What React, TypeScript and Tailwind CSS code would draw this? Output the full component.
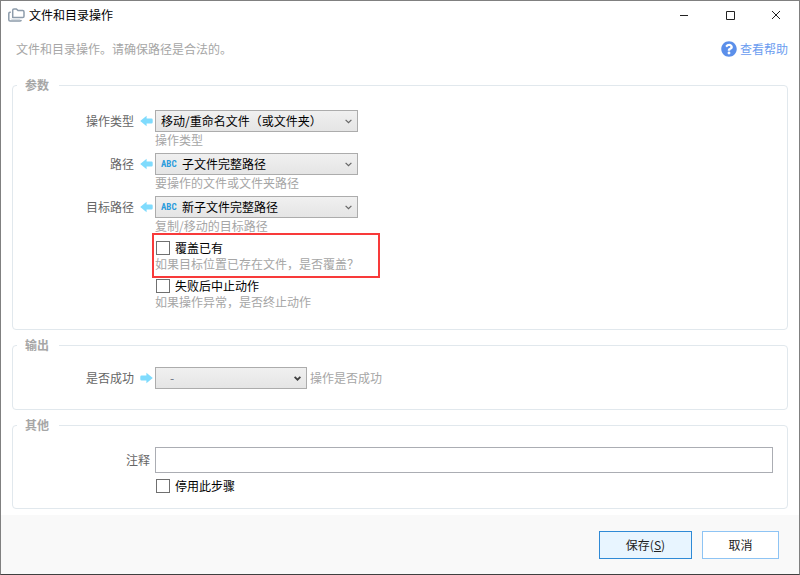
import React, { useState } from 'react';
import { FaQuestionCircle } from 'react-icons/fa';

const FolderIcon = () => (
  <svg width="17" height="14" viewBox="0 0 17 14" fill="none" stroke="#8d9cab" strokeWidth="1.5" strokeLinejoin="round" aria-hidden="true">
    <path d="M4.7 9.6V2.2q0-1.3 1.3-1.3h2.4l1.6 1.7h4.7q1.3 0 1.3 1.3v4.4q0 1.3-1.3 1.3z" />
    <path d="M2.8 4.3H2q-1.2 0-1.2 1.2v6.3q0 1.3 1.3 1.3h9.6q1.3 0 1.5-1.3" />
    <path d="M3 10.5q0 1 1 1h8" stroke="#d3dbe2" strokeWidth="1" />
  </svg>
);

const Arrow = ({ out }: { out?: boolean }) => (
  <svg width="13" height="12" viewBox="0 0 13 12" fill="#7fdbfd" className={out ? 'shrink-0 rotate-180' : 'shrink-0'} aria-hidden="true">
    <path d="M0.2 6L6.6 0.8v2.7h4.9q1.2 0 1.2 1.2v2.6q0 1.2-1.2 1.2H6.6v2.7z" />
  </svg>
);

interface DropDownProps {
  id: string;
  value: string;
  abc?: boolean;
  empty?: boolean;
}

const DropDown: React.FC<DropDownProps> = ({ id, value, abc, empty }) => {
  let pad = 'pl-[5px] text-black';
  if (abc) pad = 'pl-[26px] text-black';
  if (empty) pad = 'pl-3.5 text-gray-500';
  return (
    <div className={empty ? 'relative w-[152px]' : 'relative w-[203px]'}>
      <select
        id={id}
        className={`block h-[22px] w-full appearance-none border border-[#acacac] bg-linear-to-b from-[#f0f0f0] to-[#e5e5e5] pr-5 text-xs ${pad}`}
      >
        <option>{value}</option>
      </select>
      {abc && (
        <span className="pointer-events-none absolute inset-y-0 left-1.5 flex items-center font-['Roboto_Condensed','Roboto',sans-serif] text-[9px] font-bold text-[#2a9bdc]">
          ABC
        </span>
      )}
      <svg
        className="pointer-events-none absolute inset-y-0 right-1.5 my-auto"
        width="7"
        height="5"
        viewBox="0 0 7 5"
        fill="none"
        stroke={empty ? '#404040' : '#666666'}
        strokeWidth={empty ? 1.8 : 1.2}
      >
        <path d="M0.6 0.8L3.5 3.7L6.4 0.8" />
      </svg>
    </div>
  );
};

interface RowProps {
  id: string;
  label: string;
  out?: boolean;
  children: React.ReactNode;
}

const Row = ({ id, label, out, children }: RowProps) => (
  <div className="flex items-start gap-0.5">
    <div className="flex h-[22px] w-[140px] shrink-0 items-center justify-end gap-1.5">
      <label htmlFor={id} className="text-[#666666]">{label}</label>
      <Arrow out={out} />
    </div>
    {children}
  </div>
);

const Check = ({ id, label }: { id: string; label: string }) => {
  const [checked, setChecked] = useState<boolean>(false);
  return (
    <div className="flex h-[17px] items-center gap-[5px] pl-px">
      <input
        type="checkbox"
        id={id}
        checked={checked}
        onChange={(e) => setChecked(e.target.checked)}
        className="size-3.5 appearance-none border border-[#707070] bg-white checked:bg-[#2f8ad6]"
      />
      <label htmlFor={id} className="text-black">{label}</label>
    </div>
  );
};

const Hint = ({ children }: { children: React.ReactNode }) => (
  <p className="text-[#a6a6a6]">{children}</p>
);

const Group = ({ title, children }: { title: string; children: React.ReactNode }) => (
  <fieldset className="rounded border border-[#e1e8ed]">
    <legend className="ml-1 pr-2.5 pl-2 font-bold text-[#a6a6a6]">{title}</legend>
    {children}
  </fieldset>
);

export default function App() {
  const [note, setNote] = useState('');

  return (
    <div className="flex min-h-screen flex-col border border-[#808080] border-b-[#404040] bg-white font-['Noto_Sans_CJK_SC',sans-serif] text-xs">
      {/* Title bar */}
      <header className="flex h-7 items-center justify-between pr-[18px] pl-[7px]">
        <div className="flex items-center gap-1">
          <FolderIcon />
          <h1 className="text-black">文件和目录操作</h1>
        </div>
        <div className="flex items-center gap-9">
          <button aria-label="最小化">
            <svg width="10" height="10" viewBox="0 0 10 10" stroke="#222" fill="none"><path d="M1 5.5h8" /></svg>
          </button>
          <button aria-label="最大化">
            <svg width="10" height="10" viewBox="0 0 10 10" stroke="#222" fill="none"><path d="M1.5 1.5h8v8h-8z" /></svg>
          </button>
          <button aria-label="关闭">
            <svg width="10" height="10" viewBox="0 0 10 10" stroke="#222" fill="none"><path d="M1 1l8 8M9 1L1 9" /></svg>
          </button>
        </div>
      </header>

      <main className="flex-1 px-[11px]">
        <div className="flex h-12 items-center justify-between pb-2 pl-1">
          <p className="text-[#a6a6a6]">文件和目录操作。请确保路径是合法的。</p>
          <a href="#help" className="flex items-center gap-[3px] text-[#6a9cf0]">
            <FaQuestionCircle size={16} className="text-[#5b8fea]" />
            查看帮助
          </a>
        </div>

        <div className="flex flex-col gap-[7px] pb-[5px]">
          <Group title="参数">
            <div className="flex flex-col gap-[5px] pt-[17px] pb-[19px]">
              <Row id="type" label="操作类型">
                <div>
                  <DropDown id="type" value="移动/重命名文件（或文件夹）" />
                  <Hint>操作类型</Hint>
                </div>
              </Row>
              <Row id="path" label="路径">
                <div>
                  <DropDown id="path" value="子文件完整路径" abc />
                  <Hint>要操作的文件或文件夹路径</Hint>
                </div>
              </Row>
              <Row id="target" label="目标路径">
                <div>
                  <DropDown id="target" value="新子文件完整路径" abc />
                  <Hint>复制/移动的目标路径</Hint>
                </div>
              </Row>
              <div className="relative ml-[142px] w-[222px]">
                <Check id="overwrite" label="覆盖已有" />
                <Hint>如果目标位置已存在文件，是否覆盖？</Hint>
                {/* highlight frame */}
                <div className="pointer-events-none absolute -inset-x-[3px] -inset-y-1.5 border-2 border-[#f83a3a]" />
              </div>
              <div className="ml-[142px]">
                <Check id="stop" label="失败后中止动作" />
                <Hint>如果操作异常，是否终止动作</Hint>
              </div>
            </div>
          </Group>

          <Group title="输出">
            <div className="pt-3.5 pb-5">
              <Row id="success" label="是否成功" out>
                <div className="flex items-center gap-[3px]">
                  <DropDown id="success" value="-" empty />
                  <Hint>操作是否成功</Hint>
                </div>
              </Row>
            </div>
          </Group>

          <Group title="其他">
            <div className="flex flex-col gap-1 pt-3.5 pr-3.5 pb-[14px]">
              <div className="flex items-center gap-[5px]">
                <label htmlFor="note" className="w-[137px] shrink-0 text-right text-[#666666]">注释</label>
                <input
                  id="note"
                  type="text"
                  value={note}
                  onChange={(e) => setNote(e.target.value)}
                  className="h-[26px] min-w-0 flex-1 border border-[#abadb3] bg-white px-1"
                />
              </div>
              <div className="ml-[142px]">
                <Check id="disable" label="停用此步骤" />
              </div>
            </div>
          </Group>
        </div>
      </main>

      <footer className="flex justify-end gap-2.5 bg-[#f9f9f9] pt-4 pr-5 pb-[15px]">
        <button className="h-7 w-[93px] border border-[#2f8ad6] bg-[#e8f5ff] text-[#222]">
          保存(<u>S</u>)
        </button>
        <button className="h-7 w-[77px] border border-[#8ec4f4] bg-white text-[#222]">取消</button>
      </footer>
    </div>
  );
}
